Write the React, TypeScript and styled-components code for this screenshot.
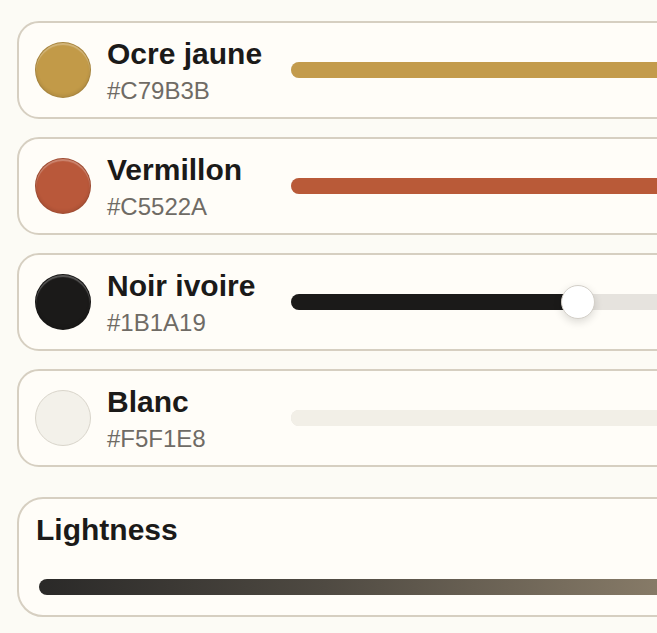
import React from 'react';
import styled, { createGlobalStyle } from 'styled-components';

const GlobalStyle = createGlobalStyle`
  html, body {
    margin: 0;
    padding: 0;
    background: #fcfbf5;
    overflow: hidden;
  }
  body {
    font-family: "Liberation Sans", Arial, Helvetica, sans-serif;
    color: #1b1a19;
  }
`;

const Page = styled.main`
  width: 760px;
  padding: 21px 0 0 17px;
  display: flex;
  flex-direction: column;
`;

const PigmentList = styled.section`
  display: flex;
  flex-direction: column;
  gap: 18px;
`;

const PigmentCard = styled.div`
  display: flex;
  align-items: center;
  gap: 16px;
  height: 98px;
  box-sizing: border-box;
  padding: 0 16px;
  background: #fffdf8;
  border: 2px solid #d6cfc1;
  border-radius: 22px;
`;

const Swatch = styled.div<{ $color: string; $light?: boolean }>`
  flex: 0 0 56px;
  height: 56px;
  border-radius: 50%;
  box-sizing: border-box;
  background: ${(p) => p.$color};
  border: ${(p) => (p.$light ? '1.5px solid #d9d5cb' : '1px solid rgba(0, 0, 0, 0.14)')};
  box-shadow: ${(p) =>
    p.$light
      ? 'none'
      : 'inset 0 2px 1px rgba(255, 255, 255, 0.28), inset 0 -2px 3px rgba(0, 0, 0, 0.08)'};
`;

const Info = styled.div`
  flex: 0 0 168px;
  display: flex;
  flex-direction: column;
  gap: 6px;
  margin-top: 2px;
`;

const Name = styled.div`
  font-size: 30px;
  line-height: 34px;
  font-weight: 700;
  color: #1b1a19;
  white-space: nowrap;
`;

const Hex = styled.div`
  font-size: 24px;
  line-height: 28px;
  color: #6f6b65;
`;

const Track = styled.div`
  position: relative;
  flex: 1;
  height: 16px;
  border-radius: 8px;
  background: #e6e3de;
`;

const Fill = styled.div<{ $color: string }>`
  height: 100%;
  border-radius: 8px;
  background: ${(p) => p.$color};
`;

const Thumb = styled.div`
  position: absolute;
  top: 50%;
  width: 34px;
  height: 34px;
  box-sizing: border-box;
  border-radius: 50%;
  background: #ffffff;
  border: 1.5px solid #d3cfc8;
  box-shadow: 0 3px 8px rgba(0, 0, 0, 0.14);
  transform: translate(-50%, -50%);
`;

const LightnessCard = styled.section`
  margin-top: 30px;
  box-sizing: border-box;
  height: 120px;
  padding: 14px 20px 0 17px;
  background: #fffdf8;
  border: 2px solid #d6cfc1;
  border-radius: 26px;
`;

const SectionTitle = styled.h2`
  margin: 0 0 32px;
  font-size: 30px;
  line-height: 34px;
  font-weight: 700;
  color: #1b1a19;
`;

const GradientTrack = styled.div`
  margin: 0 0 0 3px;
  height: 16px;
  border-radius: 8px;
  background: linear-gradient(90deg, #2a2928 0%, #4f4a42 40%, #867a67 86%, #95876f 100%);
`;

const pigments = [
  { name: 'Ocre jaune', hex: '#C79B3B', swatch: '#c29a48', track: '#c39b4c', value: 92 },
  { name: 'Vermillon', hex: '#C5522A', swatch: '#b9583a', track: '#b95a38', value: 88 },
  { name: 'Noir ivoire', hex: '#1B1A19', swatch: '#1b1a19', track: '#1b1a19', value: 61.3 },
  { name: 'Blanc', hex: '#F5F1E8', swatch: '#f3f1ea', track: '#f2efe7', value: 100, light: true },
];

const App: React.FC = () => {
  return (
    <>
      <GlobalStyle />
      <Page>
        <PigmentList>
          {pigments.map((p) => (
            <PigmentCard key={p.name}>
              <Swatch $color={p.swatch} $light={p.light} />
              <Info>
                <Name>{p.name}</Name>
                <Hex>{p.hex}</Hex>
              </Info>
              <Track>
                <Fill $color={p.track} style={{ width: `${p.value}%` }} />
                <Thumb style={{ left: `${p.value}%` }} />
              </Track>
            </PigmentCard>
          ))}
        </PigmentList>

        <LightnessCard>
          <SectionTitle>Lightness</SectionTitle>
          <GradientTrack />
        </LightnessCard>
      </Page>
    </>
  );
};

export default App;
